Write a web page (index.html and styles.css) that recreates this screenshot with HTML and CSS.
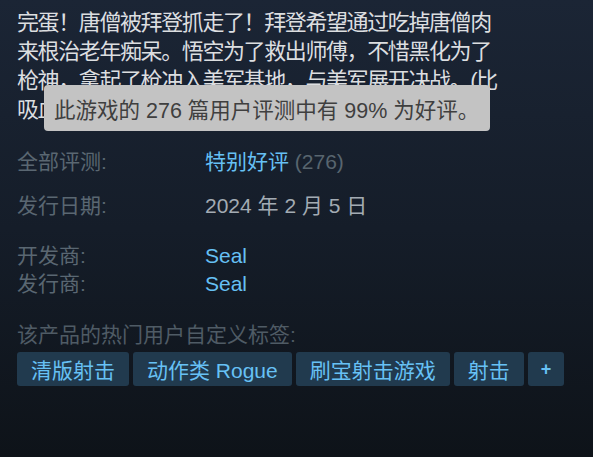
FILE: index.html
```html
<!DOCTYPE html>
<html lang="zh-CN">
<head>
<meta charset="utf-8">
<link rel="stylesheet" href="styles.css">
</head>
<body>
<div class="page">
  <div class="desc-wrap">
    <p class="desc">完蛋！唐僧被拜登抓走了！拜登希望通过吃掉唐僧肉来根治老年痴呆。悟空为了救出师傅，不惜黑化为了枪神，拿起了枪冲入美军基地，与美军展开决战。(比吸血鬼幸存者更爽)</p>
    <div class="tooltip">此游戏的 276 篇用户评测中有 99% 为好评。</div>
  </div>
  <div class="row reviews">
    <span class="label">全部评测:</span>
    <span class="value"><span class="link">特别好评</span> <span class="count">(276)</span></span>
  </div>
  <div class="row date">
    <span class="label">发行日期:</span>
    <span class="value">2024 年 2 月 5 日</span>
  </div>
  <div class="devs">
    <div class="row tight">
      <span class="label">开发商:</span>
      <span class="value link">Seal</span>
    </div>
    <div class="row tight">
      <span class="label">发行商:</span>
      <span class="value link">Seal</span>
    </div>
  </div>
  <div class="tags-label">该产品的热门用户自定义标签:</div>
  <div class="tags">
    <span class="tag">清版射击</span>
    <span class="tag">动作类 Rogue</span>
    <span class="tag">刷宝射击游戏</span>
    <span class="tag">射击</span>
    <span class="tag plus">+</span>
  </div>
</div>
</body>
</html>
```

FILE: styles.css
```css
html, body {
  margin: 0;
  padding: 0;
  height: 100%;
}
body {
  background: linear-gradient(180deg, #1b2535 0%, #151d29 50%, #0e1319 100%);
  font-family: "Liberation Sans", "Noto Sans CJK SC", sans-serif;
  overflow: hidden;
}
.page {
  padding: 8px 0 0 17px;
}
.desc-wrap {
  position: relative;
  width: 492px;
}
.desc {
  margin: 0;
  font-size: 22px;
  letter-spacing: -1.4px;
  line-height: 29px;
  color: #dcdee0;
}
.tooltip {
  position: absolute;
  left: 27px;
  top: 77px;
  width: 446px;
  height: 46px;
  box-sizing: border-box;
  padding: 0 0 0 10px;
  display: flex;
  align-items: center;
  background: #c3c3c3;
  color: #3f3f3f;
  border-radius: 4px;
  font-size: 21.5px;
  white-space: nowrap;
}
.row {
  display: grid;
  grid-template-columns: 188px 1fr;
  font-size: 21px;
  line-height: 29px;
}
.label {
  color: #5a6772;
}
.value {
  color: #a3abb3;
}
.link {
  color: #66c0f4;
}
.count {
  color: #58656f;
}
.reviews {
  margin-top: 23px;
}
.date {
  margin-top: 15px;
}
.devs {
  margin-top: 22px;
}
.tight {
  line-height: 28px;
}
.tags-label {
  margin-top: 22px;
  font-size: 21px;
  line-height: 29px;
  color: #4f5b65;
}
.tags {
  margin-top: 3px;
  display: flex;
  gap: 4px;
}
.tag {
  height: 34px;
  box-sizing: border-box;
  padding: 0 14px;
  display: flex;
  align-items: center;
  background: #213a4e;
  color: #67c1f5;
  font-size: 21px;
  border-radius: 3px;
}
.tag.plus {
  padding: 0 13px;
  font-weight: bold;
  font-size: 18px;
}
```
